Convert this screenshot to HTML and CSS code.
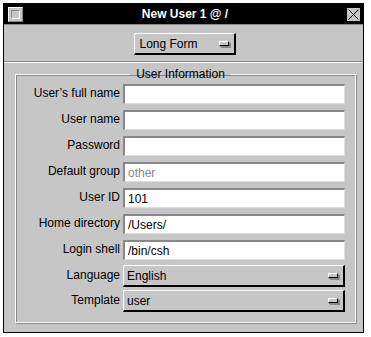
FILE: index.html
```html
<!DOCTYPE html>
<html lang="en">

<head>
    <meta charset="UTF-8">
    <title>New User 1 @ /</title>
    <link rel="stylesheet" href="styles.css">
</head>

<body>
    <div class="window">
        <div class="title-bar">
            <span class="title-box"><span class="title-box-inner"></span></span>
            <span class="title-text">New User 1 @ /</span>
            <span class="close-box">
                <svg width="13" height="13" viewBox="0 0 13 13">
                    <path d="M1.5 1.5 L11.5 11.5 M11.5 1.5 L1.5 11.5" stroke="#000" stroke-width="1" fill="none"/>
                </svg>
            </span>
        </div>

        <div class="top-row">
            <div class="popup form-popup">
                <span class="popup-label">Long Form</span>
                <span class="popup-mark"></span>
            </div>
        </div>

        <div class="separator"></div>

        <fieldset class="group">
            <legend>User Information</legend>

            <div class="row">
                <label>User’s full name</label>
                <div class="field"></div>
            </div>
            <div class="row">
                <label>User name</label>
                <div class="field"></div>
            </div>
            <div class="row">
                <label>Password</label>
                <div class="field"></div>
            </div>
            <div class="row">
                <label>Default group</label>
                <div class="field disabled">other</div>
            </div>
            <div class="row">
                <label>User ID</label>
                <div class="field">101</div>
            </div>
            <div class="row">
                <label>Home directory</label>
                <div class="field">/Users/</div>
            </div>
            <div class="row">
                <label>Login shell</label>
                <div class="field">/bin/csh</div>
            </div>
            <div class="row popup-row">
                <label>Language</label>
                <div class="popup wide">
                    <span class="popup-label">English</span>
                    <span class="popup-mark"></span>
                </div>
            </div>
            <div class="row popup-row">
                <label>Template</label>
                <div class="popup wide">
                    <span class="popup-label">user</span>
                    <span class="popup-mark"></span>
                </div>
            </div>
        </fieldset>
    </div>
</body>

</html>
```

FILE: styles.css
```css
body {
    margin: 0;
    background-color: #fff;
    font-family: "Liberation Sans", Arial, sans-serif;
    font-size: 12px;
    color: #000;
}

.window {
    margin: 3px 0 0 3px;
    width: 359px;
    height: 328px;
    border: 1px solid #000;
    background-color: #c6c6c6;
}

.title-bar {
    height: 20px;
    background-color: #000;
    border-bottom: 1px solid #888;
    display: flex;
    align-items: center;
    padding: 0 3px 0 3px;
}

.title-box {
    width: 13px;
    height: 13px;
    border: 1px solid #fff;
    border-right-color: #888;
    border-bottom-color: #888;
    background-color: #c6c6c6;
    display: flex;
    align-items: center;
    justify-content: center;
    margin-left: 1px;
}

.title-box-inner {
    width: 7px;
    height: 7px;
    border: 1px solid #888;
    border-right-color: #fff;
    border-bottom-color: #fff;
    background-color: #c6c6c6;
}

.title-text {
    flex: 1;
    text-align: center;
    color: #fff;
    font-weight: bold;
    font-size: 12px;
}

.close-box {
    width: 13px;
    height: 13px;
    background-color: #c6c6c6;
    display: flex;
}

.top-row {
    display: flex;
    justify-content: center;
    padding-top: 8px;
    height: 22px;
}

.popup {
    box-sizing: border-box;
    height: 22px;
    display: flex;
    align-items: center;
    justify-content: space-between;
    background-color: #c6c6c6;
    border-top: 1px solid #fff;
    border-left: 1px solid #fff;
    border-right: 2px solid #000;
    border-bottom: 2px solid #000;
    padding: 0 5px 0 5px;
}

.form-popup {
    width: 102px;
    margin-left: 2px;
}

.popup-label {
    font-size: 12px;
}

.popup-mark {
    width: 8px;
    height: 3px;
    background-color: #c6c6c6;
    border: 1px solid #fff;
    border-right-color: #000;
    border-bottom-color: #000;
    box-shadow: 1px 1px 0 #888, 2px 2px 0 #888;
}

.separator {
    margin-top: 6px;
    height: 1px;
    background-color: #fff;
    border-top: 1px solid #888;
}

.group {
    margin: 4px 7px 0 11px;
    padding: 0 10px 9px 0;
    border: 1px solid #fff;
    box-shadow: inset 1px 1px 0 #888, 1px 1px 0 #888;
}

.group legend {
    padding: 0 6px;
    margin: 0 auto;
    font-size: 12px;
    line-height: 14px;
}

.row {
    display: flex;
    align-items: flex-start;
    height: 26px;
}

.row label {
    width: 104px;
    text-align: right;
    padding-right: 3px;
    margin-top: 5px;
}

.field {
    box-sizing: border-box;
    flex: 1;
    height: 20px;
    margin-top: 3px;
    background-color: #fff;
    border-top: 2px solid #888;
    border-left: 2px solid #888;
    border-right: 1px solid #ddd;
    border-bottom: 1px solid #ddd;
    padding: 1px 3px;
    line-height: 16px;
}

.field.disabled {
    color: #888;
}

.popup-row {
    height: 25px;
}

.popup-row label {
    margin-top: 5px;
}

.popup.wide {
    flex: 1;
    margin-top: 2px;
    padding-left: 3px;
}
```
